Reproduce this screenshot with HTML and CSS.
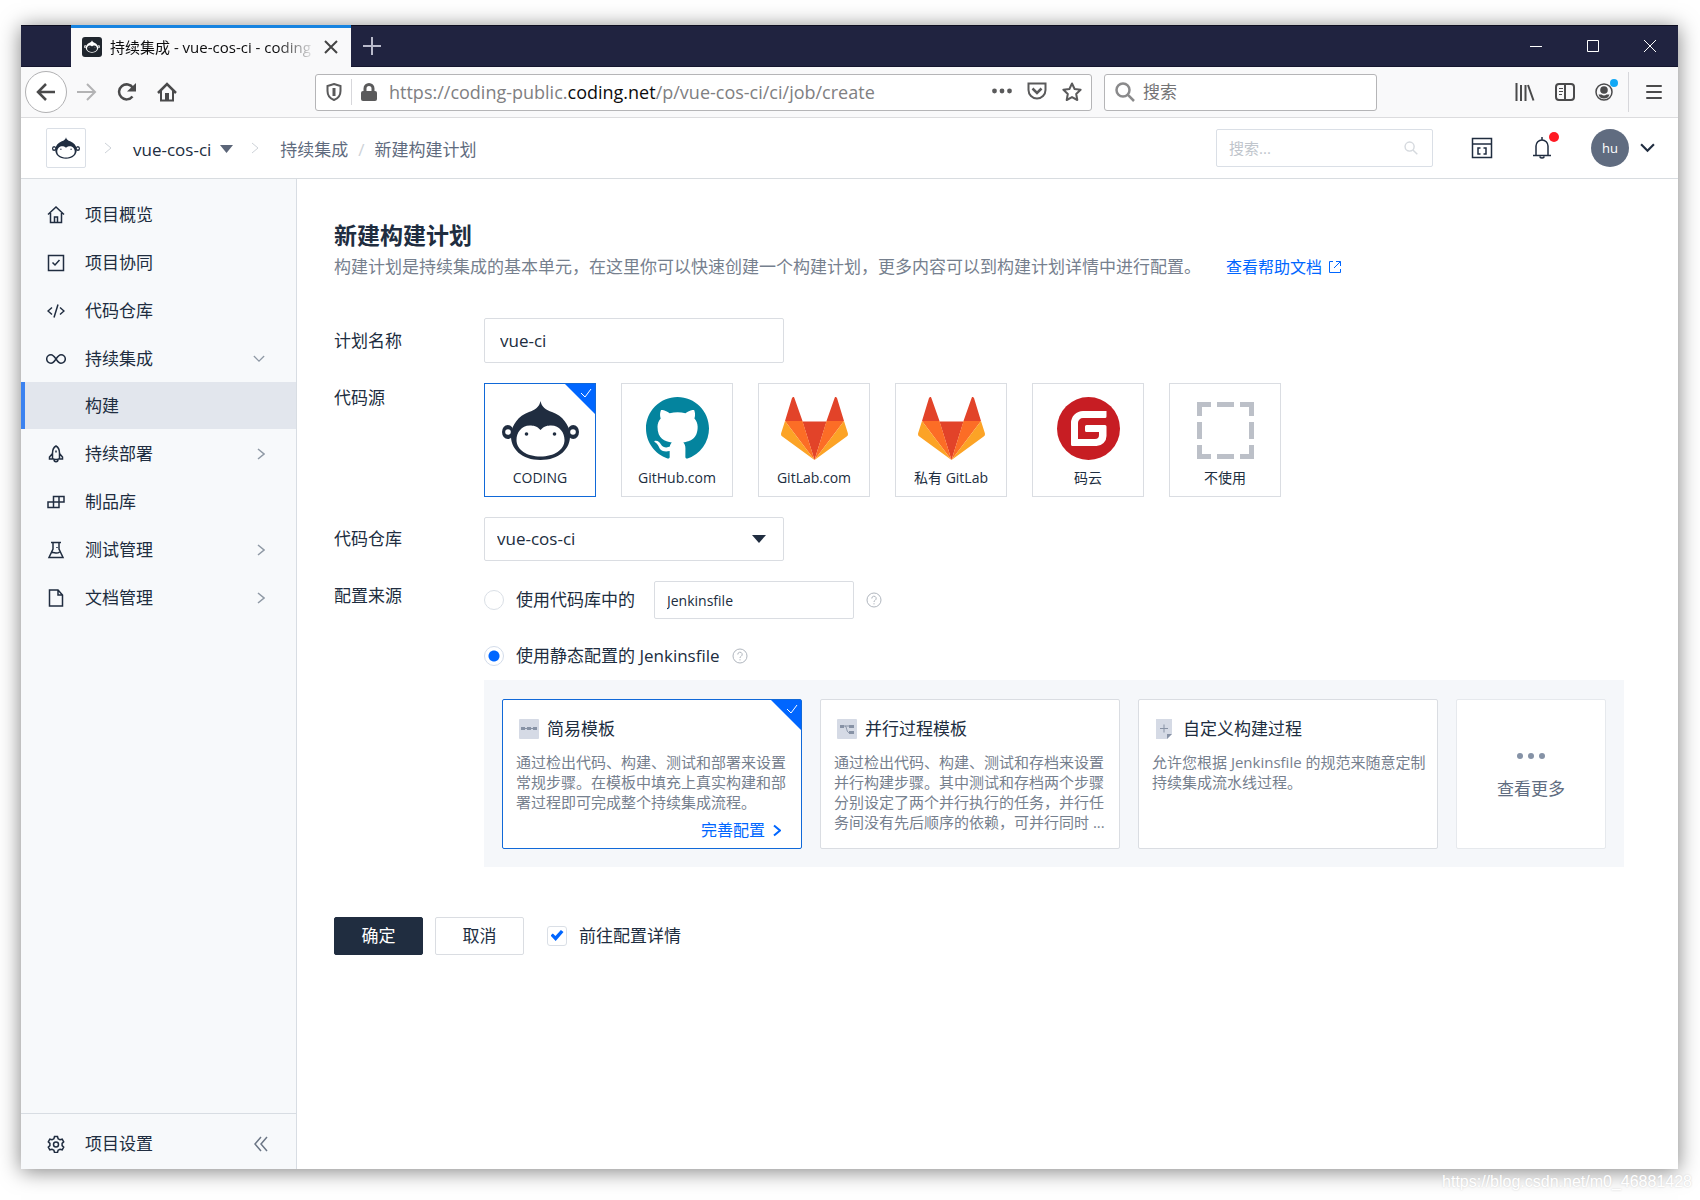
FILE: index.html
```html
<!doctype html>
<html lang="zh-CN">
<head>
    <meta charset="utf-8">
    <title>持续集成 - vue-cos-ci - coding</title>
    <link rel="stylesheet" href="styles.css">
</head>
<body>
    <!-- shared logos -->
    <svg class="symbols" aria-hidden="true">
        <symbol id="monkey" viewBox="0 0 77 59">
            <path fill="currentColor" d="M38.5 0C39.5 6 44 9 50 11C61 15 67 24 68 33C69 48 57 59 38.5 59C20 59 8 48 9 33C10 24 16 15 27 11C33 9 37.5 6 38.5 0Z"/>
            <ellipse cx="5.8" cy="31" rx="5.8" ry="7" fill="currentColor"/>
            <ellipse cx="71.2" cy="31" rx="5.8" ry="7" fill="currentColor"/>
            <circle class="monkey-face" cx="6" cy="31" r="2.8"/>
            <circle class="monkey-face" cx="71" cy="31" r="2.8"/>
            <path class="monkey-face" d="M38.5 29C35 25 31 24.5 28 24.5C19 24.5 14.5 32 14.5 39C14.5 49 25 55.5 38.5 55.5C52 55.5 62.5 49 62.5 39C62.5 32 58 24.5 49 24.5C46 24.5 42 25 38.5 29Z"/>
            <circle cx="24.5" cy="33" r="1.8" fill="currentColor"/>
            <circle cx="52.5" cy="33" r="1.8" fill="currentColor"/>
        </symbol>
        <symbol id="gitlab" viewBox="0 0 67 63">
            <path fill="#e24329" d="M12 0Q12.8-.4 13.3 0.8L21.5 24H4L11 1zM55 0Q54.2-.4 53.7.8L45.5 24H63L56 1zM21.5 24.5H45.5L33.5 63z"/>
            <path fill="#fc6d26" d="M4 24H21.5L33.5 63zM63 24H45.5L33.5 63z"/>
            <path fill="#fca326" d="M4 24L.2 36Q-.4 38 1 39.300L33.500 63zM63 24L66.800 36Q67.400 38 66 39.300L33.500 63z"/>
        </symbol>
        <symbol id="help" viewBox="0 0 16 16">
            <g fill="none" stroke="currentColor">
                <circle cx="8" cy="8" r="7"/>
                <path d="M5.800 6.500a2.200 2.200 0 1 1 3.300 1.800C8.300 8.800 8 9.100 8 10M8 11.200v1.200"/>
            </g>
        </symbol>
        <symbol id="search" viewBox="0 0 20 20">
            <g fill="none" stroke="currentColor">
                <circle cx="8" cy="8" r="6.500"/>
                <path d="M12.700 12.700L19 19"/>
            </g>
        </symbol>
        <symbol id="chevron" viewBox="0 0 8 12">
            <path fill="none" stroke="currentColor" d="M1 1l6 5-6 5"/>
        </symbol>
        <symbol id="chevron-down" viewBox="0 0 14 9">
            <path fill="none" stroke="currentColor" d="M1 1l6 6 6-6"/>
        </symbol>
        <symbol id="tick" viewBox="0 0 12 10">
            <path fill="none" stroke="currentColor" d="M1 5l4 4 6-8"/>
        </symbol>
    </svg>

    <div class="window">
        <div class="titlebar">
            <div class="tab">
                <span class="favicon"><svg width="16" height="13"><use href="#monkey"/></svg></span>
                <span class="tab-title">持续集成 - vue-cos-ci - coding</span>
                <button type="button" class="plain" aria-label="关闭标签页">
                    <svg width="14" height="14" fill="none" stroke="#444" stroke-width="2"><path d="M1 1l12 12M13 1L1 13"/></svg>
                </button>
            </div>
            <button type="button" class="plain new-tab" aria-label="新标签页">
                <svg width="18" height="18" fill="none" stroke="#b9bacb" stroke-width="2"><path d="M9 0v18M0 9h18"/></svg>
            </button>
            <div class="window-buttons">
                <button type="button" aria-label="最小化"><svg width="12" height="12"><path stroke="#fff" d="M0 6.500h12"/></svg></button>
                <button type="button" aria-label="最大化"><svg width="12" height="12"><path fill="none" stroke="#fff" d="M.5.5h11v11H.5z"/></svg></button>
                <button type="button" aria-label="关闭"><svg width="14" height="14"><path stroke="#fff" d="M1 1l12 12M13 1L1 13"/></svg></button>
            </div>
        </div>

        <div class="toolbar">
            <button type="button" class="back" aria-label="后退">
                <svg width="20" height="18" fill="none" stroke="#4a4a4b" stroke-width="2.500"><path d="M19 9H2M10 1L2 9l8 8"/></svg>
            </button>
            <div class="nav-buttons">
                <button type="button" class="plain" aria-label="前进">
                    <svg width="20" height="18" fill="none" stroke="#b3b3b4" stroke-width="2"><path d="M0 9h18M10 1l8 8-8 8"/></svg>
                </button>
                <button type="button" class="plain" aria-label="刷新">
                    <svg width="20" height="18" fill="none" stroke="#4a4a4b" stroke-width="2.500"><path d="M15.500 13.500A7.500 7.500 0 1 1 16 5"/><path fill="#4a4a4b" stroke="none" d="M19 0v8.500h-9z"/></svg>
                </button>
                <button type="button" class="plain" aria-label="主页">
                    <svg width="20" height="20" fill="none" stroke="#4a4a4b" stroke-width="2"><path stroke-width="2.500" d="M1 11l9-9 9 9"/><path d="M4 9v9.500h12V9"/><path fill="#4a4a4b" stroke="none" d="M8 11h4v8H8z"/></svg>
                </button>
            </div>
            <div class="urlbar">
                <svg width="16" height="18" fill="none" stroke="#5a5a5b" stroke-width="2"><path d="M8 1l6.500 2v5c0 4-2.500 7.500-6.500 9-4-1.500-6.500-5-6.500-9V3z"/><path d="M8 5v8" stroke-width="3"/></svg>
                <span class="line"></span>
                <svg class="lock" width="16" height="18"><path fill="none" stroke="#5a5a5b" stroke-width="3" d="M4 9V5.500a4 4 0 0 1 8 0V9"/><rect y="8" width="16" height="10" rx="2" fill="#5a5a5b"/></svg>
                <span class="url">https://coding-public.<b>coding.net</b>/p/vue-cos-ci/ci/job/create</span>
                <span class="url-icons">
                    <svg width="20" height="18" fill="#5a5a5b"><circle cx="2.500" cy="9" r="2.400"/><circle cx="10" cy="9" r="2.400"/><circle cx="17.500" cy="9" r="2.400"/></svg>
                    <svg width="20" height="18" fill="none" stroke="#5a5a5b" stroke-width="2"><path d="M1.500 1.500h17V8a8.500 8.500 0 0 1-17 0z"/><path stroke-width="2.500" d="M5.500 6.500L10 11l4.500-4.500"/></svg>
                    <svg width="20" height="20" fill="none" stroke="#5a5a5b" stroke-width="2" stroke-linejoin="round"><path d="M10 1.500l2.600 5.500 6 .8-4.400 4.200 1.100 6L10 15.100 4.700 18l1.100-6L1.400 7.800l6-.8z"/></svg>
                </span>
            </div>
            <div class="searchbar">
                <svg width="20" height="20" color="#8a8a8b" stroke-width="2.500"><use href="#search"/></svg>
                <input type="text" placeholder="搜索" aria-label="浏览器搜索">
            </div>
            <div class="toolbar-icons">
                <svg width="20" height="18" fill="none" stroke="#4a4a4b" stroke-width="2"><path d="M1.500 0v18M6 2v16M10.500 2v16M13 2l5.500 15.500"/></svg>
                <svg width="20" height="18" fill="none" stroke="#4a4a4b" stroke-width="2"><rect x="1" y="1" width="18" height="16" rx="3"/><path d="M10 2v14"/><path stroke-width="1" d="M4 5.500h4M4 8.500h4M4 11.500h3"/></svg>
                <span class="account">
                    <svg width="18" height="18"><circle cx="9" cy="9" r="8" fill="none" stroke="#4a4a4b" stroke-width="1.500"/><circle cx="9" cy="7" r="3.800" fill="#4a4a4b"/><path fill="#4a4a4b" d="M3.500 11.500h3c1.500 1.200 3.500 1.200 5 0h3c-1 3-3 4-5.500 4s-4.500-1-5.500-4z"/></svg>
                    <i class="dot blue"></i>
                </span>
            </div>
            <button type="button" class="menu-button" aria-label="菜单">
                <svg width="16" height="16" stroke="#4a4a4b" stroke-width="2" stroke-linecap="round"><path d="M1 2h14M1 8h14M1 14h14"/></svg>
            </button>
        </div>

        <header class="header">
            <a href="#" class="logo" aria-label="CODING"><svg width="28" height="22"><use href="#monkey"/></svg></a>
            <svg class="sep" width="8" height="14"><use href="#chevron"/></svg>
            <a href="#" class="project">vue-cos-ci <svg width="13" height="9"><path fill="#5b6578" d="M0 0h13L6.500 8z"/></svg></a>
            <svg class="sep" width="8" height="14"><use href="#chevron"/></svg>
            <nav class="crumbs"><a href="#">持续集成</a><span class="slash">/</span><a href="#">新建构建计划</a></nav>
            <div class="header-right">
                <div class="header-search">
                    <input type="text" placeholder="搜索..." aria-label="搜索">
                    <svg width="14" height="14" color="#d5d9de" stroke-width="2"><use href="#search"/></svg>
                </div>
                <svg width="22" height="22" fill="none" stroke="#202d40" stroke-width="1.500"><path d="M1.500 1.500h19v19h-19zM1 7h20M9.500 11H7v6h2.500M12.500 11H15v6h-2.500"/></svg>
                <span class="bell">
                    <svg width="18" height="22" fill="none" stroke="#202d40" stroke-width="1.500"><path d="M0 18.500h18M3 18V9a6 6 0 0 1 12 0v9M9 0v3M7 19.500c0 2 4 2 4 0"/></svg>
                    <i class="dot red"></i>
                </span>
                <a href="#" class="user"><span class="avatar">hu</span><svg width="15" height="10" color="#202d40" stroke-width="2"><use href="#chevron-down"/></svg></a>
            </div>
        </header>

        <div class="body">
            <aside class="sidebar">
                <ul class="menu">
                    <li><a href="#"><svg viewBox="0 0 18 18"><path d="M1 8.500L9 1l8 7.500M3.500 7v9.500h11V7M7.500 16v-5h3v5"/></svg>项目概览</a></li>
                    <li><a href="#"><svg viewBox="0 0 18 18"><path d="M1.500 1.500h15v15h-15zM5.500 8.500L8 11l4.500-5"/></svg>项目协同</a></li>
                    <li><a href="#"><svg viewBox="0 0 18 18"><path d="M5 5.500L1 9l4 3.500M13 5.500L17 9l-4 3.500M11 2.500l-4 13"/></svg>代码仓库</a></li>
                    <li>
                        <a href="#"><svg class="wide" viewBox="0 0 20 18"><path d="M10 9C8 6 7 4.700 5 4.700a4.300 4.300 0 0 0 0 8.600C7 13.300 8 12 10 9s3-4.300 5-4.300a4.300 4.300 0 0 1 0 8.600C13 13.300 12 12 10 9z"/></svg>持续集成
                            <svg class="arrow down" viewBox="0 0 14 9"><use href="#chevron-down"/></svg></a>
                        <ul class="submenu">
                            <li><a href="#" class="active">构建</a></li>
                        </ul>
                    </li>
                    <li><a href="#"><svg viewBox="0 0 18 18"><path d="M9 1C6.500 2.500 5.500 5 5.500 8v5c0 2 7 2 7 0V8c0-3-1-5.500-3.500-7zM5.500 8.500L2.500 12v2h3M12.500 8.500l3 3.500v2h-3M7 14.500c0 3 4 3 4 0M9 5.500v2"/></svg>持续部署
                        <svg class="arrow" viewBox="0 0 8 12"><use href="#chevron"/></svg></a></li>
                    <li><a href="#"><svg viewBox="0 0 18 18"><path d="M1 9h11v5.500H1zM6.500 3.500H17V9H6.500zM6.500 9v5.500M12 3.500V9"/></svg>制品库</a></li>
                    <li><a href="#"><svg viewBox="0 0 18 18"><path d="M4 1.500h10M6 1.500V8l-4 8.500h14L12 8V1.500M4 12c3-2 5 2 8.500-1M10 6v1"/></svg>测试管理
                        <svg class="arrow" viewBox="0 0 8 12"><use href="#chevron"/></svg></a></li>
                    <li><a href="#"><svg viewBox="0 0 18 18"><path d="M2.500 1h8.500l4.500 5v11h-13zM11 1v5h4.500"/></svg>文档管理
                        <svg class="arrow" viewBox="0 0 8 12"><use href="#chevron"/></svg></a></li>
                </ul>
                <div class="sidebar-footer">
                    <a href="#"><svg viewBox="0 0 18 18"><path d="M7.500 1.500h3l.6 2.200 1.900 1.100 2.200-.6 1.500 2.600-1.600 1.600v2.200l1.600 1.600-1.500 2.600-2.200-.6-1.900 1.100-.6 2.200h-3l-.6-2.200L5 14.200l-2.200.6-1.500-2.600 1.600-1.600V8.400L1.300 6.800l1.500-2.600 2.200.6 1.900-1.100z"/><circle cx="9" cy="9.500" r="2.500"/></svg>项目设置</a>
                    <button type="button" class="plain" aria-label="收起侧栏"><svg width="14" height="16" fill="none" stroke="#6b7685" stroke-width="1.500"><path d="M7 1L1 8l6 7M13 1L7 8l6 7"/></svg></button>
                </div>
            </aside>

            <main class="main">
                <h1>新建构建计划</h1>
                <p class="intro">构建计划是持续集成的基本单元，在这里你可以快速创建一个构建计划，更多内容可以到构建计划详情中进行配置。<a href="#">查看帮助文档 <svg width="14" height="14" fill="none" stroke="currentColor"><path d="M5 1.500H1.500v11h11V9M8 1.500h4.500V6M12.500 1.500L6 8"/></svg></a></p>

                <form>
                    <div class="row">
                        <label class="label" for="name">计划名称</label>
                        <input type="text" id="name" class="input" value="vue-ci">
                    </div>

                    <div class="row">
                        <span class="label top">代码源</span>
                        <div class="sources">
                            <label class="source">
                                <input type="radio" name="source" checked>
                                <span class="icon"><svg width="77" height="59"><use href="#monkey"/></svg></span>CODING
                                <span class="corner"><svg width="12" height="10"><use href="#tick"/></svg></span>
                            </label>
                            <label class="source">
                                <input type="radio" name="source">
                                <span class="icon"><svg width="63" height="63" viewBox="0 0 16 16"><path fill="#04849e" d="M8 0C3.580 0 0 3.580 0 8c0 3.540 2.290 6.530 5.470 7.590.4.07.55-.17.55-.38 0-.19-.01-.82-.01-1.490-2.010.37-2.530-.49-2.690-.94-.09-.23-.48-.94-.82-1.130-.28-.15-.68-.52-.01-.53.63-.01 1.080.58 1.230.82.72 1.210 1.870.87 2.330.66.07-.52.28-.87.51-1.070-1.780-.2-3.640-.89-3.640-3.950 0-.87.31-1.590.82-2.150-.08-.2-.36-1.020.08-2.120 0 0 .67-.21 2.200.82.64-.18 1.320-.27 2-.27.68 0 1.360.09 2 .27 1.530-1.040 2.200-.82 2.200-.82.44 1.100.16 1.920.08 2.120.51.56.82 1.270.82 2.150 0 3.070-1.870 3.750-3.650 3.950.29.25.54.73.54 1.480 0 1.070-.01 1.930-.01 2.200 0 .21.15.46.55.38A8.010 8.010 0 0 0 16 8c0-4.420-3.580-8-8-8z"/></svg></span>GitHub.com
                            </label>
                            <label class="source">
                                <input type="radio" name="source">
                                <span class="icon"><svg width="67" height="63"><use href="#gitlab"/></svg></span>GitLab.com
                            </label>
                            <label class="source">
                                <input type="radio" name="source">
                                <span class="icon"><svg width="67" height="63"><use href="#gitlab"/></svg></span>私有 GitLab
                            </label>
                            <label class="source">
                                <input type="radio" name="source">
                                <span class="icon"><svg width="63" height="63"><circle cx="31.500" cy="31.500" r="31.500" fill="#c71d23"/><path fill="#fff" d="M49.500 14v5.500q0 1.500-1.500 1.500H26a5 5 0 0 0-5 5v16h17a4 4 0 0 0 4-4v-3H29.500q-1.500 0-1.500-1.500V29.500q0-1.500 1.500-1.500H48q1.500 0 1.500 1.500V39a10 10 0 0 1-10 10H15.500q-1.500 0-1.500-1.500V26a12 12 0 0 1 12-12z"/></svg></span>码云
                            </label>
                            <label class="source">
                                <input type="radio" name="source">
                                <span class="icon"><svg width="57" height="58"><path fill="none" stroke="#bcc0c8" stroke-width="5" d="M14 2.500H2.500V14M20 2.500h17M43 2.500h11.500V14M54.500 20v17M54.500 43v11.500H43M37 54.500H20M14 54.500H2.500V43M2.500 37V20"/></svg></span>不使用
                            </label>
                        </div>
                    </div>

                    <div class="row">
                        <label class="label" for="depot">代码仓库</label>
                        <div class="select">
                            <select id="depot"><option>vue-cos-ci</option></select>
                            <svg width="14" height="9"><path fill="#202d40" d="M0 0h14L7 8z"/></svg>
                        </div>
                    </div>

                    <div class="row">
                        <span class="label top">配置来源</span>
                        <div class="config">
                            <div class="option">
                                <input type="radio" class="radio" name="config" id="repo-file">
                                <label for="repo-file">使用代码库中的</label>
                                <input type="text" class="input small" value="Jenkinsfile" aria-label="Jenkinsfile 路径">
                                <svg class="help" width="16" height="16"><use href="#help"/></svg>
                            </div>
                            <div class="option second">
                                <input type="radio" class="radio" name="config" id="static-file" checked>
                                <label for="static-file">使用静态配置的 Jenkinsfile</label>
                                <svg class="help" width="16" height="16"><use href="#help"/></svg>
                            </div>
                            <div class="templates">
                                <div class="template selected">
                                    <h3><svg width="20" height="20"><rect width="20" height="20" rx="1" fill="#d5dae5"/><path stroke="#8792a5" d="M3 9.500h14"/><path fill="#8792a5" d="M2 8h4v3H2zM8 8h4v3H8zM14 8h4v3h-4z"/></svg>简易模板</h3>
                                    <p>通过检出代码、构建、测试和部署来设置常规步骤。在模板中填充上真实构建和部署过程即可完成整个持续集成流程。</p>
                                    <a href="#" class="configure">完善配置<svg width="8" height="13" stroke-width="2"><use href="#chevron"/></svg></a>
                                    <span class="corner"><svg width="12" height="10"><use href="#tick"/></svg></span>
                                </div>
                                <div class="template">
                                    <h3><svg width="20" height="20"><rect width="20" height="20" rx="1" fill="#d5dae5"/><path fill="none" stroke="#8792a5" d="M4 7h13M8 7c2 0 1 7 5 7h3"/><path fill="#8792a5" d="M3 6h4v3H3zM12 6h5v3h-5zM12 12h5v3h-5z"/></svg>并行过程模板</h3>
                                    <p>通过检出代码、构建、测试和存档来设置并行构建步骤。其中测试和存档两个步骤分别设定了两个并行执行的任务，并行任务间没有先后顺序的依赖，可并行同时 ...</p>
                                </div>
                                <div class="template">
                                    <h3><svg width="20" height="20"><path fill="#d5dae5" d="M1 0h16v15l-5 5H1z"/><path stroke="#8792a5" d="M5 9.500h8M9 5.500v8"/><path fill="#8792a5" d="M12 20v-5h5z"/></svg>自定义构建过程</h3>
                                    <p>允许您根据 Jenkinsfile 的规范来随意定制持续集成流水线过程。</p>
                                </div>
                                <button type="button" class="more">
                                    <svg width="28" height="6" fill="#8592a6"><circle cx="3" cy="3" r="3"/><circle cx="14" cy="3" r="3"/><circle cx="25" cy="3" r="3"/></svg>
                                    查看更多
                                </button>
                            </div>
                        </div>
                    </div>

                    <div class="actions">
                        <button type="submit" class="button primary">确定</button>
                        <button type="button" class="button">取消</button>
                        <input type="checkbox" id="detail" class="checkbox" checked>
                        <label for="detail">前往配置详情</label>
                    </div>
                </form>
            </main>
        </div>
    </div>
    <div class="watermark">https://blog.csdn.net/m0_46881428</div>
</body>
</html>
```

FILE: styles.css
```css
* {
    box-sizing: border-box;
}
body {
    margin: 0;
    padding: 25px 22px 31px 21px;
    min-height: 100vh;
    display: flex;
    position: relative;
    background: #fff;
    color: #202d40;
    font: 17px/24px "Open Sans", "Noto Sans CJK SC", sans-serif;
}
a {
    color: inherit;
    text-decoration: none;
}
button, input, select {
    font: inherit;
    color: inherit;
}
button {
    cursor: pointer;
}
svg {
    display: block;
    flex: none;
}
ul {
    list-style: none;
    margin: 0;
    padding: 0;
}
.symbols {
    position: absolute;
    width: 0;
    height: 0;
}
.monkey-face {
    fill: var(--face, #fff);
}
.plain {
    padding: 0;
    border: 0;
    background: none;
}

/* browser window */
.window {
    flex: 1;
    min-width: 0;
    display: flex;
    flex-direction: column;
    background: #fff;
    box-shadow: 0 2px 20px rgba(0, 0, 0, 0.5);
}
.titlebar {
    display: flex;
    align-items: center;
    height: 42px;
    padding-left: 50px;
    background: #202340;
    border-top: 1px solid #0d0d20;
    border-bottom: 1px solid #14152e;
}
.tab {
    display: flex;
    align-items: center;
    width: 280px;
    height: 42px;
    padding: 0 13px 2px 11px;
    background: #f9f9fa;
    border-top: 3px solid #1683e0;
}
.favicon {
    --face: #20262e;
    display: flex;
    align-items: center;
    justify-content: center;
    width: 20px;
    height: 20px;
    margin-right: 8px;
    border-radius: 3px;
    background: #20262e;
    color: #fff;
}
.tab-title {
    flex: 1;
    overflow: hidden;
    white-space: nowrap;
    margin-right: 8px;
    font-size: 15px;
    color: #0c0c0d;
    -webkit-mask-image: linear-gradient(to left, transparent, #000 40px);
    mask-image: linear-gradient(to left, transparent, #000 40px);
}
.new-tab {
    margin-left: 12px;
}
.window-buttons {
    display: flex;
    margin-left: auto;
}
.window-buttons button {
    display: flex;
    align-items: center;
    justify-content: center;
    width: 57px;
    height: 40px;
    padding: 0;
    border: 0;
    background: none;
}
.toolbar {
    display: flex;
    align-items: center;
    height: 51px;
    padding: 0 16px 0 4px;
    background: #f9f9fa;
    border-bottom: 1px solid #dcdcde;
}
.back {
    display: flex;
    align-items: center;
    justify-content: center;
    width: 42px;
    height: 42px;
    padding: 0;
    border: 1px solid #b1b1b3;
    border-radius: 50%;
    background: #fff;
}
.nav-buttons {
    display: flex;
    align-items: center;
    gap: 20px;
    margin: 0 138px 0 10px;
}
.urlbar, .searchbar {
    display: flex;
    align-items: center;
    height: 37px;
    border: 1px solid #b5b5b7;
    border-radius: 3px;
    background: #fff;
}
.urlbar {
    flex: 1;
    padding: 0 9px 0 10px;
}
.line {
    width: 1px;
    height: 26px;
    margin: 0 9px;
    background: #d7d7db;
}
.lock {
    margin-right: 12px;
}
.url {
    flex: 1;
    color: #808082;
    font-size: 18px;
    white-space: nowrap;
}
.url b {
    font-weight: 400;
    color: #0c0c0d;
}
.url-icons {
    display: flex;
    gap: 15px;
}
.searchbar {
    width: 273px;
    margin-left: 12px;
    padding-left: 10px;
}
.searchbar input {
    flex: 1;
    min-width: 0;
    padding: 0 8px;
    border: 0;
    background: none;
}
.searchbar input::placeholder {
    color: #747476;
}
.toolbar-icons {
    display: flex;
    gap: 20px;
    margin-left: 138px;
}
.account, .bell {
    position: relative;
}
.dot {
    position: absolute;
    border-radius: 50%;
}
.dot.blue {
    top: -4px;
    right: -5px;
    width: 8px;
    height: 8px;
    background: #12a8f5;
}
.dot.red {
    top: -5px;
    right: -8px;
    width: 10px;
    height: 10px;
    background: #ff1a24;
}
.menu-button {
    height: 40px;
    margin-left: 15px;
    padding: 0 0 0 17px;
    border: 0;
    border-left: 1px solid #d7d7db;
    background: none;
}

/* site header */
.header {
    display: flex;
    align-items: center;
    height: 61px;
    padding: 0 23px 0 25px;
    border-bottom: 1px solid #d8dce0;
}
.logo {
    display: flex;
    align-items: center;
    justify-content: center;
    width: 40px;
    height: 40px;
    border: 1px solid #dadfe6;
    border-radius: 2px;
}
.sep {
    margin: 0 21px 0 18px;
    color: #cdd2d8;
}
.project {
    display: flex;
    align-items: center;
    gap: 9px;
}
.project, .crumbs {
    padding-top: 3px;
}
.crumbs {
    display: flex;
    color: #5f6b7e;
}
.slash {
    margin: 0 10px;
    color: #cdd2d8;
}
.header-right {
    display: flex;
    align-items: center;
    margin-left: auto;
}
.header-search {
    display: flex;
    align-items: center;
    width: 217px;
    height: 38px;
    margin-right: 38px;
    padding: 0 14px 0 12px;
    border: 1px solid #dadfe6;
    border-radius: 2px;
}
.header-search input {
    flex: 1;
    min-width: 0;
    padding: 0;
    border: 0;
    font-size: 15px;
}
.header-search input::placeholder {
    color: #c0c5cc;
}
.bell {
    margin: 0 40px;
}
.user {
    display: flex;
    align-items: center;
    gap: 11px;
}
.avatar {
    width: 38px;
    height: 38px;
    border-radius: 50%;
    background: #606c80;
    color: #fff;
    font-size: 13px;
    line-height: 38px;
    text-align: center;
}

/* sidebar */
.body {
    flex: 1;
    display: flex;
}
.sidebar {
    flex: none;
    display: flex;
    flex-direction: column;
    width: 276px;
    background: #f7f9fb;
    border-right: 1px solid #d8dde3;
}
.menu {
    flex: 1;
    display: flex;
    flex-direction: column;
    gap: 1px;
    padding-top: 12px;
}
.sidebar a {
    display: flex;
    align-items: center;
    height: 47px;
    padding: 0 28px 0 64px;
}
.sidebar a svg {
    width: 18px;
    height: 18px;
    margin: 0 20px 0 -38px;
    fill: none;
    stroke: #202d40;
    stroke-width: 1.5px;
}
.sidebar a .wide {
    width: 20px;
    margin: 0 19px 0 -39px;
}
.sidebar a .arrow {
    width: 8px;
    height: 12px;
    margin: 0 3px 0 auto;
    color: #8f99a5;
}
.sidebar a .down {
    width: 12px;
    height: 8px;
}
.submenu .active {
    border-left: 4px solid #3b82f0;
    padding-left: 60px;
    background: #e2e6ed;
}
.sidebar-footer {
    display: flex;
    align-items: center;
    height: 56px;
    padding: 4px 28px 0 0;
    border-top: 1px solid #d8dde3;
}
.sidebar-footer a {
    flex: 1;
}

/* form */
.main {
    flex: 1;
    min-width: 0;
    padding: 40px 54px 40px 37px;
}
h1 {
    margin: 0;
    font-size: 23px;
    line-height: 32px;
}
.intro {
    display: flex;
    align-items: center;
    margin: 4px 0 39px;
    color: #76808e;
}
.intro a {
    display: flex;
    align-items: center;
    gap: 6px;
    margin-left: 25px;
    font-size: 16px;
    color: #0066ff;
}
.row {
    display: flex;
    align-items: center;
    margin-bottom: 20px;
}
.label {
    flex: none;
    width: 150px;
}
.label.top {
    align-self: flex-start;
    padding-top: 3px;
}
.input {
    width: 300px;
    height: 45px;
    padding: 0 15px;
    border: 1px solid #dadde2;
    border-radius: 2px;
    background: #fff;
}
.input.small {
    width: 200px;
    height: 38px;
    padding: 0 12px;
    margin-left: 7px;
    font-size: 14px;
}
.sources {
    display: flex;
    gap: 25px;
}
.source {
    position: relative;
    width: 112px;
    height: 114px;
    padding-top: 11px;
    border: 1px solid #dadde2;
    font-size: 14px;
    line-height: 20px;
    text-align: center;
}
.source input {
    position: absolute;
    opacity: 0;
}
.source:has(:checked), .template.selected {
    border-color: #1169d8;
}
.icon {
    display: flex;
    align-items: flex-end;
    justify-content: center;
    height: 65px;
    margin-bottom: 8px;
}
.corner {
    position: absolute;
    top: 0;
    right: 0;
    width: 30px;
    height: 30px;
    padding: 4px 3px 0 15px;
    background: #0066ff;
    color: #fff;
    clip-path: polygon(0 0, 100% 0, 100% 100%);
}
.select {
    position: relative;
    width: 300px;
}
.select select {
    appearance: none;
    display: block;
    width: 100%;
    height: 44px;
    padding: 0 12px;
    border: 1px solid #dadde2;
    border-radius: 2px;
    background: #fff;
}
.select svg {
    position: absolute;
    top: 18px;
    right: 18px;
    pointer-events: none;
}
.config {
    flex: 1;
    min-width: 0;
}
.option {
    display: flex;
    align-items: center;
    gap: 12px;
    height: 38px;
}
.option.second {
    height: 36px;
    margin: 19px 0 6px;
}
.help {
    color: #b0b6be;
}
.radio {
    appearance: none;
    width: 20px;
    height: 20px;
    margin: 0;
    border: 1px solid #dadfe6;
    border-radius: 50%;
    background: #fff;
}
.radio:checked {
    border-color: #d3dcea;
    background: radial-gradient(circle, #0066ff 5px, #fff 6px);
}
.templates {
    display: flex;
    gap: 18px;
    padding: 19px 18px 18px;
    background: #f5f7fa;
}
.template {
    position: relative;
    flex: 1;
    height: 150px;
    padding: 16px 10px 0 13px;
    border: 1px solid #dadde2;
    border-radius: 2px;
    background: #fff;
}
.template h3 {
    display: flex;
    align-items: center;
    gap: 8px;
    margin: 0 0 10px;
    padding-left: 3px;
    font-size: 17px;
    font-weight: 400;
    line-height: 26px;
}
.template p {
    margin: 0;
    color: #76808e;
    font-size: 15px;
    line-height: 20px;
}
.configure {
    display: flex;
    align-items: center;
    justify-content: flex-end;
    gap: 8px;
    margin-top: 6px;
    padding-right: 10px;
    color: #0066ff;
    font-size: 16px;
}
.more {
    display: flex;
    flex-direction: column;
    align-items: center;
    justify-content: center;
    gap: 18px;
    width: 150px;
    height: 150px;
    padding: 6px 0 0;
    border: 1px solid #e6e9ed;
    border-radius: 2px;
    background: #fff;
    color: #606c80;
}
.actions {
    display: flex;
    align-items: center;
    gap: 12px;
    margin-top: 50px;
}
.button {
    width: 89px;
    height: 38px;
    padding: 0;
    border: 1px solid #dadde2;
    border-radius: 2px;
    background: #fff;
}
.primary {
    border-color: #202d40;
    background: #202d40;
    color: #fff;
}
.checkbox {
    appearance: none;
    width: 20px;
    height: 20px;
    margin: 0 0 0 11px;
    border: 1px solid #dadfe6;
    border-radius: 3px;
    background: #fff;
}
.checkbox:checked::before {
    content: "";
    display: block;
    width: 13px;
    height: 11px;
    margin: 3px auto;
    background: #0066ff;
    clip-path: polygon(0 50%, 18% 32%, 38% 55%, 80% 0, 100% 18%, 40% 100%);
}
.watermark {
    position: absolute;
    right: 8px;
    bottom: 8px;
    color: #fff;
    font: 16px/20px "Liberation Sans", sans-serif;
    text-shadow: 0 0 2px #ccc;
}
```
